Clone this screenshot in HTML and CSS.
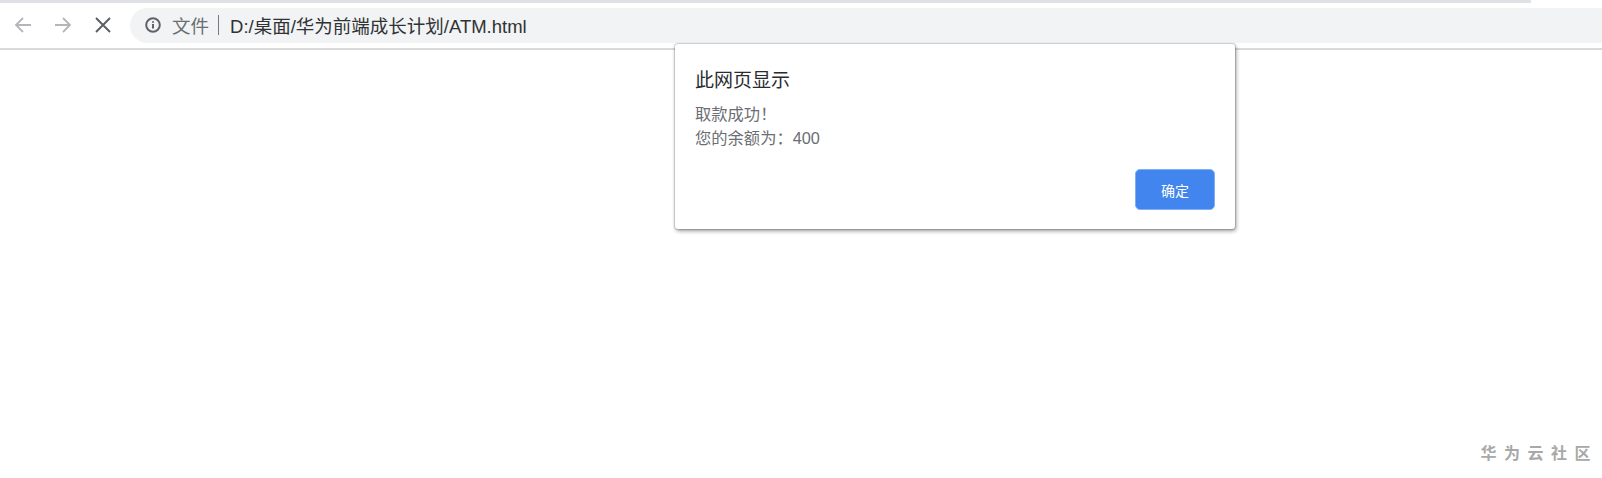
FILE: index.html
```html
<!DOCTYPE html>
<html lang="zh-CN">
<head>
    <meta charset="UTF-8">
    <title>ATM</title>
    <link rel="stylesheet" href="styles.css">
</head>
<body>
    <div class="load-bar"></div>
    <div class="toolbar">
        <div class="nav-icons">
            <svg class="nav-icon" width="18" height="18" viewBox="0 0 18 18"><path d="M17 9H2M9 2L2 9l7 7" fill="none" stroke="#b4b6b9" stroke-width="1.8"/></svg>
            <svg class="nav-icon" width="18" height="18" viewBox="0 0 18 18"><path d="M1 9h15M9 2l7 7-7 7" fill="none" stroke="#b4b6b9" stroke-width="1.8"/></svg>
            <svg class="nav-icon" width="18" height="18" viewBox="0 0 18 18"><path d="M2 2l14 14M16 2L2 16" fill="none" stroke="#5a5d61" stroke-width="1.9"/></svg>
        </div>
        <div class="address-bar">
            <svg class="info-icon" width="16" height="16" viewBox="0 0 16 16">
                <circle cx="8" cy="8" r="6.8" fill="none" stroke="#5f6368" stroke-width="2"/>
                <path d="M8 7v4.5M8 4.2v1.6" fill="none" stroke="#5f6368" stroke-width="2"/>
            </svg>
            <span class="scheme">文件</span>
            <span class="divider"></span>
            <span class="url">D:/桌面/华为前端成长计划/ATM.html</span>
        </div>
    </div>
    <div class="toolbar-line"></div>

    <div class="dialog">
        <div class="dialog-title">此网页显示</div>
        <div class="dialog-msg">取款成功！<br>您的余额为：400</div>
        <div class="dialog-actions">
            <button class="ok-btn">确定</button>
        </div>
    </div>

    <div class="watermark">华为云社区</div>
</body>
</html>
```

FILE: styles.css
```css
/* General */
html, body {
    height: 100%;
}

body {
    margin: 0;
    background: #ffffff;
    font-family: "Liberation Sans", "Noto Sans CJK SC", sans-serif;
    overflow: hidden;
}

/* Browser toolbar */
.load-bar {
    width: 1531px;
    height: 3px;
    background: #dfe1e6;
}

.toolbar {
    display: flex;
    align-items: flex-start;
    height: 45px;
    padding-top: 5px;
    box-sizing: border-box;
}

.nav-icons {
    display: flex;
    gap: 22px;
    width: 130px;
    padding: 8px 0 0 14px;
    box-sizing: border-box;
}

.address-bar {
    flex: 1;
    display: flex;
    align-items: center;
    height: 35px;
    padding: 0 0 2px 15px;
    box-sizing: border-box;
    background: #f1f3f4;
    border-radius: 18px 0 0 18px;
    font-size: 18.5px;
}

.scheme {
    margin-left: 11px;
    color: #6a6d71;
}

.divider {
    width: 1px;
    height: 20px;
    margin: 0 11px 0 9px;
    background: #75787c;
}

.url {
    color: #303235;
}

.toolbar-line {
    height: 2px;
    background: #d8d9db;
}

/* Alert dialog */
.dialog {
    position: absolute;
    left: 675px;
    top: 44px;
    width: 560px;
    height: 185px;
    padding: 0 20px;
    box-sizing: border-box;
    background: #ffffff;
    border-radius: 3px;
    box-shadow: 0 0 1px 1px rgba(0, 0, 0, 0.16), 1px 2px 4px rgba(0, 0, 0, 0.4);
}

.dialog-title {
    margin-top: 23px;
    font-size: 19px;
    line-height: 27px;
    color: #2b2c2f;
}

.dialog-msg {
    margin-top: 8px;
    font-size: 16.3px;
    line-height: 24px;
    color: #6b6e72;
}

.dialog-actions {
    display: flex;
    justify-content: flex-end;
    margin-top: 19px;
}

.ok-btn {
    width: 80px;
    height: 41px;
    border: 1px solid #7fb0f5;
    border-radius: 5px;
    background: #4285ee;
    color: #ffffff;
    font-family: inherit;
    font-size: 14px;
}

/* Watermark */
.watermark {
    position: absolute;
    right: 12px;
    bottom: 14px;
    font-size: 16px;
    font-weight: bold;
    letter-spacing: 7.5px;
    margin-right: -8px;
    color: #a8a8a8;
}
```
